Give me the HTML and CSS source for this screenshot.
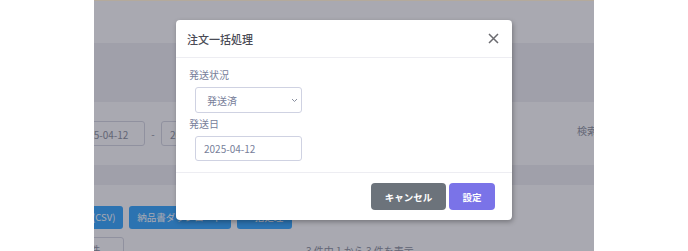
FILE: index.html
```html
<!DOCTYPE html>
<html lang="ja">
<head>
  <meta charset="UTF-8" />
  <meta name="viewport" content="width=device-width, initial-scale=1" />
  <title>注文一覧</title>
  <link rel="stylesheet" href="styles.css">
</head>
<body>

  <div class="app">
    <div class="page">
      <!-- Top bar -->
      <div class="topbar"></div>
      <div class="band band-top"></div>

      <!-- Filters -->
      <div class="filter-card">
        <div class="date-range">
          <span class="date-box">2025-04-12</span>
          <span class="dash">-</span>
          <span class="date-box">2025-04-12</span>
        </div>
        <span class="search-label">検索</span>
      </div>
      <div class="band band-mid"></div>

      <!-- Actions -->
      <div class="actions">
        <span class="btn-blue">注文ダウンロード(CSV)</span>
        <span class="btn-blue">納品書ダウンロード</span>
        <span class="btn-blue btn-narrow">一括処理</span>
      </div>
      <div class="list-footer">
        <span class="per-page">10 件</span>
        <span class="count">3 件中 1 から 3 件を表示</span>
      </div>
    </div>

    <!-- Modal backdrop -->
    <div class="backdrop"></div>

    <!-- Modal -->
    <div class="modal">
      <div class="modal-header">
        <h5>注文一括処理</h5>
        <svg class="close" width="11" height="11" viewBox="0 0 11 11">
          <path d="M1 1 L10 10 M10 1 L1 10" stroke="#6b6b70" stroke-width="1.5" fill="none"/>
        </svg>
      </div>
      <div class="modal-body">
        <label>発送状況</label>
        <div class="select">
          <span>発送済</span>
          <svg width="7" height="5" viewBox="0 0 7 5">
            <path d="M1 1 L3.5 3.5 L6 1" stroke="#8a90a0" stroke-width="1" fill="none"/>
          </svg>
        </div>
        <label>発送日</label>
        <div class="input">2025-04-12</div>
      </div>
      <div class="modal-footer">
        <button class="btn btn-cancel">キャンセル</button>
        <button class="btn btn-primary">設定</button>
      </div>
    </div>
  </div>

</body>
</html>
```

FILE: styles.css
```css
/* Reset & General */
body, html {
  margin: 0;
  padding: 0;
  background: #fff;
  font-family: "Noto Sans CJK JP", "Noto Sans", sans-serif;
}

.app {
  position: relative;
  width: 500px;
  height: 251px;
  margin: 0 auto;
  overflow: hidden;
  background: #fff;
  border-top: 1px solid #b4aa9c;
  box-sizing: border-box;
}

/* Background page */
.page {
  margin-left: -26px;
  width: 560px;
}

.topbar {
  height: 42px;
}

.band {
  background: #f1f1f4;
}
.band-top { height: 59px; }
.band-mid { height: 20px; }

.filter-card {
  height: 63px;
  display: flex;
  align-items: center;
  justify-content: space-between;
  padding-right: 31px;
}

.date-range {
  display: flex;
  align-items: center;
}

.date-box {
  width: 77px;
  height: 25px;
  border: 1px solid #d6d8e2;
  border-radius: 3px;
  font-size: 10px;
  line-height: 25px;
  color: #8a8f9c;
  padding-left: 8px;
  box-sizing: border-box;
}

.dash {
  width: 16px;
  text-align: center;
  font-size: 10px;
  color: #8a8f9c;
}

.search-label {
  font-size: 10px;
  color: #8a8f9c;
  margin-top: -6px;
}

.actions {
  display: flex;
  gap: 6px;
  padding-top: 21px;
  margin-left: -60px;
}

.btn-blue {
  background: #2fa6ff;
  color: #fff;
  font-size: 9.5px;
  line-height: 23px;
  height: 23px;
  padding: 0 8px;
  border-radius: 3px;
  white-space: nowrap;
}
.btn-narrow {
  width: 55px;
  padding: 0;
  text-align: center;
  box-sizing: border-box;
}

.list-footer {
  display: flex;
  align-items: flex-start;
  padding-top: 8px;
  font-size: 10px;
  color: #8a8f9c;
}

.per-page {
  width: 56px;
  height: 26px;
  border: 1px solid #d6d8e2;
  border-radius: 3px;
  box-sizing: border-box;
  padding: 4px 8px;
}

.count {
  margin-left: 182px;
  padding-top: 6px;
}

/* Modal */
.backdrop {
  position: absolute;
  inset: 0;
  background: rgba(40, 40, 60, 0.4);
}

.modal {
  position: absolute;
  top: 19px;
  left: 82px;
  width: 336px;
  background: #fff;
  border-radius: 4px;
  box-shadow: 1px 2px 5px rgba(0, 0, 0, 0.3);
}

.modal-header {
  display: flex;
  align-items: center;
  justify-content: space-between;
  height: 37px;
  padding: 0 13px 0 11px;
  border-bottom: 1px solid #ededf2;
}

.modal-header h5 {
  margin: 0;
  font-size: 11px;
  font-weight: 500;
  color: #4a4b55;
}

.modal-body {
  padding: 10px 13px 11px;
  border-bottom: 1px solid #ededf2;
}

.modal-body label {
  display: block;
  font-size: 10px;
  line-height: 14px;
  color: #77809a;
  margin-bottom: 5px;
}

.select,
.input {
  width: 107px;
  height: 26px;
  margin-left: 6px;
  border: 1px solid #cfd2e2;
  border-radius: 3px;
  box-sizing: border-box;
  font-size: 10px;
  color: #77809a;
}

.select {
  display: flex;
  align-items: center;
  justify-content: space-between;
  padding: 0 3px 0 11px;
  margin-bottom: 4px;
}

.input {
  height: 25px;
  line-height: 23px;
  padding-left: 8px;
}

.modal-footer {
  display: flex;
  justify-content: flex-end;
  gap: 3px;
  padding: 10px 17px 10px;
}

.btn {
  height: 27px;
  border: none;
  border-radius: 4px;
  color: #fff;
  font-family: inherit;
  font-size: 9.5px;
  font-weight: 700;
  padding: 0;
}

.btn-cancel {
  width: 75px;
  background: #6c737b;
}

.btn-primary {
  width: 46px;
  background: #7a73e8;
}
```
